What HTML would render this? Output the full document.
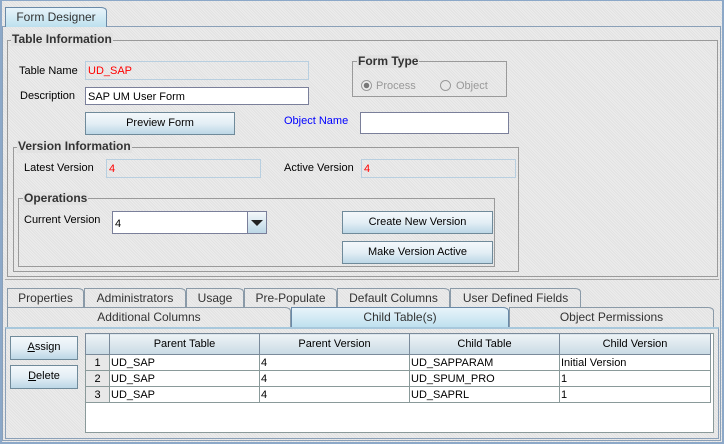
<!DOCTYPE html><html><head><style>
*{margin:0;padding:0;box-sizing:border-box}
body{width:724px;height:444px;overflow:hidden;position:relative;font-family:"Liberation Sans",sans-serif;font-size:11px;color:#000;
background:#e2e2e2;background-image:repeating-linear-gradient(45deg,rgba(255,255,255,.35) 0 1px,transparent 1px 2px)}
.a{position:absolute}
.grp{position:absolute;border:1px solid #9a9a9a}
.gt{position:absolute;font-weight:bold;font-size:12px;color:#333;background:#e2e2e2;padding:0 1px;line-height:13px}
.fld{position:absolute;border:1px solid #b8cfe0;background:transparent;padding:3px 2px;line-height:12px;color:#f00}
.wf{position:absolute;border:1px solid #7a7f9a;background:#fff;padding:3px 2px;line-height:12px}
.btn{position:absolute;border:1px solid #6f8a9a;background:linear-gradient(#f4f8fb,#e3eef5 50%,#bcd7e6);text-align:center;line-height:20px}
.tab{position:absolute;border:1px solid #8a9aa8;border-bottom:none;text-align:center;line-height:18px;font-size:12px;color:#333;border-top-right-radius:6px 4px}
table{border-collapse:collapse;position:absolute}
td{border:1px solid #8a9a9a;height:16px;padding:0 1px;line-height:14px;background:#fff}
th{border:1px solid #7a8a9a;height:21px;font-weight:normal;background:linear-gradient(#eef3f6,#c9dae4)}
</style></head><body>
<div class="a" style="left:0;top:0;width:724px;height:444px;border:2px solid #8ca8c8;border-top-width:1px"></div>
<div class="a" style="left:2px;top:26px;width:719px;height:415px;border:1px solid #8aa0b8"></div>
<div class="tab" style="left:5px;top:7px;width:102px;height:20px;background:linear-gradient(#e8f4fa,#bde0ee);border-color:#6a8aa8;font-size:12px">Form Designer</div>

<div class="grp" style="left:7px;top:40px;width:711px;height:237px"></div>
<div class="gt" style="left:11px;top:33px">Table Information</div>
<div class="a" style="left:19px;top:65px">Table Name</div>
<div class="fld" style="left:85px;top:61px;width:224px;height:19px">UD_SAP</div>
<div class="a" style="left:20px;top:90px">Description</div>
<div class="wf" style="left:85px;top:87px;width:224px;height:18px">SAP UM User Form</div>
<div class="btn" style="left:85px;top:112px;width:150px;height:23px">Preview Form</div>
<div class="a" style="left:284px;top:115px;color:#00f">Object Name</div>
<div class="wf" style="left:360px;top:112px;width:149px;height:22px"></div>

<div class="grp" style="left:352px;top:61px;width:155px;height:36px"></div>
<div class="gt" style="left:357px;top:55px">Form Type</div>
<div class="a" style="left:361px;top:80px;width:11px;height:11px;border:1px solid #999;border-radius:50%;background:radial-gradient(#777 0 2.5px,#eee 3px)"></div>
<div class="a" style="left:376px;top:80px;color:#999">Process</div>
<div class="a" style="left:440px;top:80px;width:11px;height:11px;border:1px solid #999;border-radius:50%"></div>
<div class="a" style="left:456px;top:80px;color:#999">Object</div>

<div class="grp" style="left:13px;top:147px;width:506px;height:125px"></div>
<div class="gt" style="left:17px;top:140px">Version Information</div>
<div class="a" style="left:24px;top:162px">Latest Version</div>
<div class="fld" style="left:106px;top:159px;width:155px;height:19px">4</div>
<div class="a" style="left:284px;top:162px">Active Version</div>
<div class="fld" style="left:361px;top:159px;width:155px;height:19px">4</div>

<div class="grp" style="left:18px;top:198px;width:477px;height:69px"></div>
<div class="gt" style="left:23px;top:192px">Operations</div>
<div class="a" style="left:24px;top:214px">Current Version</div>
<div class="wf" style="left:112px;top:211px;width:155px;height:23px;padding:6px 2px 0">4</div>
<div class="a" style="left:247px;top:212px;width:19px;height:21px;border-left:1px solid #7a7f9a;background:linear-gradient(#f4f8fb,#bcd7e6)"></div>
<div class="a" style="left:251px;top:220px;width:0;height:0;border-left:6px solid transparent;border-right:6px solid transparent;border-top:6px solid #222"></div>
<div class="btn" style="left:342px;top:211px;width:151px;height:23px">Create New Version</div>
<div class="btn" style="left:342px;top:241px;width:151px;height:23px">Make Version Active</div>

<div class="a" style="left:5px;top:279px;width:714px;height:1px;background:#aaa"></div>

<div class="tab" style="left:7px;top:288px;width:77px;height:20px">Properties</div>
<div class="tab" style="left:84px;top:288px;width:102px;height:20px">Administrators</div>
<div class="tab" style="left:186px;top:288px;width:58px;height:20px">Usage</div>
<div class="tab" style="left:244px;top:288px;width:93px;height:20px">Pre-Populate</div>
<div class="tab" style="left:337px;top:288px;width:113px;height:20px">Default Columns</div>
<div class="tab" style="left:450px;top:288px;width:131px;height:20px">User Defined Fields</div>
<div class="tab" style="left:7px;top:307px;width:284px;height:21px">Additional Columns</div>
<div class="tab" style="left:291px;top:307px;width:218px;height:21px;background:linear-gradient(#e8f4fa,#bde0ee);border-color:#6a8aa8">Child Table(s)</div>
<div class="tab" style="left:509px;top:307px;width:205px;height:21px">Object Permissions</div>
<div class="a" style="left:5px;top:327px;width:714px;height:112px;border:1px solid #8aa0b8;border-top:2px solid #a8c8dc"></div>

<div class="btn" style="left:10px;top:336px;width:68px;height:24px"><u>A</u>ssign</div>
<div class="btn" style="left:10px;top:365px;width:68px;height:24px"><u>D</u>elete</div>

<div class="a" style="left:85px;top:333px;width:629px;height:100px;border:1px solid #8a9a9a;background:#fff"></div>
<table style="left:85px;top:333px;width:626px">
<tr><th style="width:24px"></th><th style="width:150px">Parent Table</th><th style="width:150px">Parent Version</th><th style="width:150px">Child Table</th><th>Child Version</th></tr>
<tr><td style="text-align:center;background:#e8e8e8">1</td><td>UD_SAP</td><td>4</td><td>UD_SAPPARAM</td><td>Initial Version</td></tr>
<tr><td style="text-align:center;background:#e8e8e8">2</td><td>UD_SAP</td><td>4</td><td>UD_SPUM_PRO</td><td>1</td></tr>
<tr><td style="text-align:center;background:#e8e8e8">3</td><td>UD_SAP</td><td>4</td><td>UD_SAPRL</td><td>1</td></tr>
</table>
</body></html>
